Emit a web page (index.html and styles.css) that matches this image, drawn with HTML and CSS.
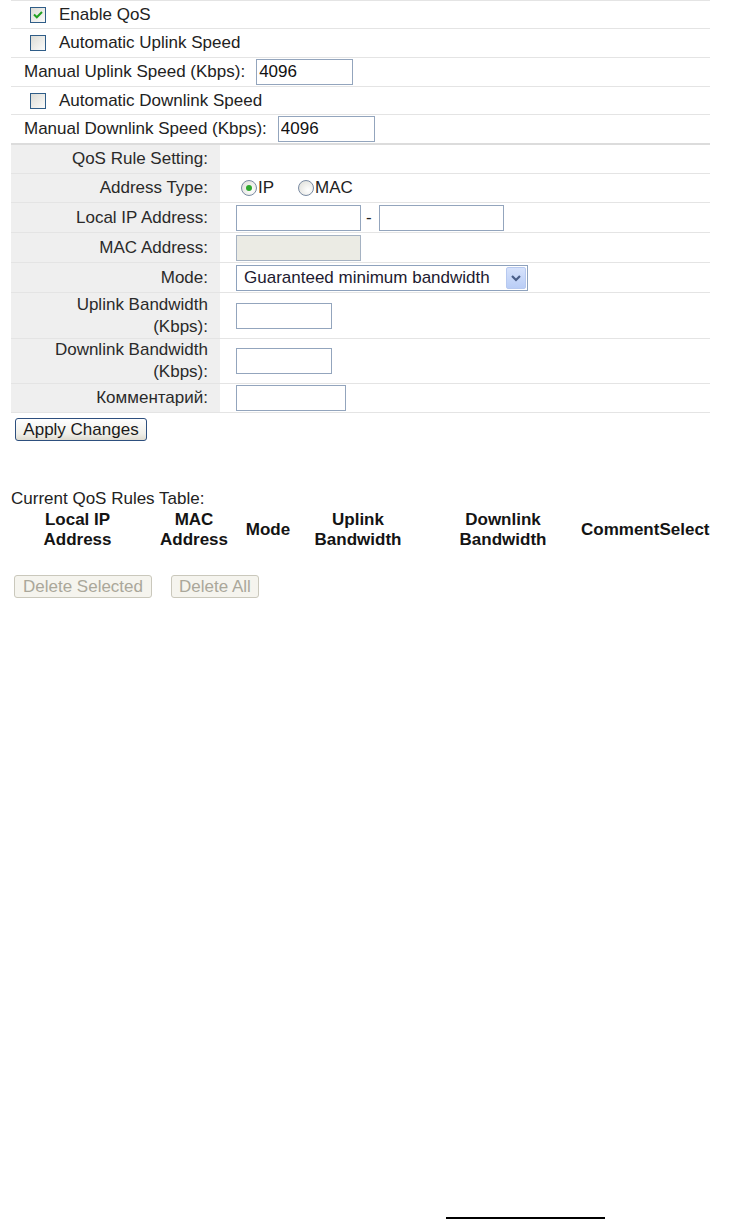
FILE: index.html
```html
<!DOCTYPE html>
<html>

<head>
    <title>QoS</title>
    <link rel="stylesheet" href="styles.css">
</head>

<body>
    <div class="page">
        <div class="qos">
            <div class="line h28 pad-cb">
                <span class="cb"><svg width="14" height="14" viewBox="0 0 14 14"><path d="M3 6.5 L5.8 9.3 L11 4" fill="none" stroke="#21a121" stroke-width="2"/></svg></span>
                <span class="cb-text">Enable QoS</span>
            </div>
            <div class="line h29 pad-cb">
                <span class="cb"></span>
                <span class="cb-text">Automatic Uplink Speed</span>
            </div>
            <div class="line h29 pad-text">
                Manual Uplink Speed (Kbps):<input class="txt speed" type="text" value="4096">
            </div>
            <div class="line h28 pad-cb">
                <span class="cb"></span>
                <span class="cb-text">Automatic Downlink Speed</span>
            </div>
            <div class="line h30 pad-text last">
                Manual Downlink Speed (Kbps):<input class="txt speed" type="text" value="4096">
            </div>
        </div>

        <div class="rules">
            <div class="field h29">
                <div class="name">QoS Rule Setting:</div>
                <div class="value"></div>
            </div>
            <div class="field h29">
                <div class="name">Address Type:</div>
                <div class="value">
                    <span class="radio on"><span class="dot"></span></span><span class="radio-text">IP</span>
                    <span class="radio second"></span><span class="radio-text">MAC</span>
                </div>
            </div>
            <div class="field h30">
                <div class="name">Local IP Address:</div>
                <div class="value">
                    <input class="txt ip" type="text"><span class="dash">-</span><input class="txt ip" type="text">
                </div>
            </div>
            <div class="field h30">
                <div class="name">MAC Address:</div>
                <div class="value">
                    <input class="txt ip" type="text" disabled>
                </div>
            </div>
            <div class="field h30">
                <div class="name">Mode:</div>
                <div class="value">
                    <div class="select">
                        <span class="select-text">Guaranteed minimum bandwidth</span>
                        <span class="arrow"><svg width="18" height="20" viewBox="0 0 18 20"><path d="M5 8 L9 12 L13 8" fill="none" stroke="#4a5f88" stroke-width="2.2"/></svg></span>
                    </div>
                </div>
            </div>
            <div class="field h46">
                <div class="name">Uplink Bandwidth<br>(Kbps):</div>
                <div class="value">
                    <input class="txt bw" type="text">
                </div>
            </div>
            <div class="field h45">
                <div class="name">Downlink Bandwidth<br>(Kbps):</div>
                <div class="value">
                    <input class="txt bw" type="text">
                </div>
            </div>
            <div class="field h29">
                <div class="name">Комментарий:</div>
                <div class="value">
                    <input class="txt comment" type="text">
                </div>
            </div>
        </div>

        <div class="apply">
            <button class="btn">Apply Changes</button>
        </div>

        <div class="current">Current QoS Rules Table:</div>
        <table class="rule-table">
            <tr>
                <th class="c1">Local IP<br>Address</th>
                <th class="c2">MAC<br>Address</th>
                <th class="c3">Mode</th>
                <th class="c4">Uplink<br>Bandwidth</th>
                <th class="c5">Downlink<br>Bandwidth</th>
                <th class="c6">Comment</th>
                <th class="c7">Select</th>
            </tr>
        </table>

        <div class="delete">
            <button class="btn off sel" disabled>Delete Selected</button>
            <button class="btn off all" disabled>Delete All</button>
        </div>

        <div class="footer"></div>
    </div>
</body>

</html>
```

FILE: styles.css
```css
html,
body {
    margin: 0;
    padding: 0;
}

body {
    font-family: "Liberation Sans", Arial, sans-serif;
    font-size: 17px;
    color: #222;
    background: #fff;
}

.page {
    min-height: 100vh;
    display: flex;
    flex-direction: column;
    align-items: flex-start;
}

/* top settings */

.qos {
    margin-left: 11px;
    width: 699px;
    border-top: 1px solid #e4e4e4;
}

.line {
    display: flex;
    align-items: center;
    box-sizing: border-box;
    border-bottom: 1px solid #e4e4e4;
    white-space: nowrap;
}

.line.last {
    border-bottom: 2px solid #dcdcdc;
}

.h28 {
    height: 28px;
}

.h29 {
    height: 29px;
}

.h30 {
    height: 30px;
}

.h45 {
    height: 45px;
}

.h46 {
    height: 46px;
}

.pad-cb {
    padding-left: 19px;
}

.pad-text {
    padding-left: 13px;
}

.cb {
    width: 16px;
    height: 16px;
    box-sizing: border-box;
    border: 1px solid #2f5d88;
    background: linear-gradient(135deg, #dcdcd6, #fbfbfa);
    display: inline-flex;
    align-items: center;
    justify-content: center;
}

.cb-text {
    margin-left: 13px;
}

.txt {
    box-sizing: border-box;
    height: 26px;
    margin: 0;
    padding: 0 2px;
    border: 1px solid #93a5bd;
    font-family: inherit;
    font-size: 17px;
    color: #111;
    background: #fff;
    outline: none;
}

.txt:disabled {
    background: #ebebe4;
    border-color: #a5b2c2;
}

.speed {
    width: 97px;
    margin-left: 11px;
}

/* rule settings */

.rules {
    margin-left: 11px;
    width: 699px;
}

.field {
    display: flex;
    box-sizing: border-box;
    border-bottom: 1px solid #e4e4e4;
}

.name {
    width: 209px;
    box-sizing: border-box;
    padding-right: 12px;
    background: #efefef;
    display: flex;
    align-items: center;
    justify-content: flex-end;
    text-align: right;
    line-height: 22px;
    color: #2a2a2a;
}

.value {
    flex: 1;
    display: flex;
    align-items: center;
    padding-left: 16px;
}

.radio {
    width: 16px;
    height: 16px;
    box-sizing: border-box;
    border: 1px solid #7a8ba3;
    border-radius: 50%;
    background: radial-gradient(circle at 65% 65%, #fff, #dcdcd6);
    display: inline-flex;
    align-items: center;
    justify-content: center;
    margin-left: 5px;
}

.radio.second {
    margin-left: 24px;
}

.radio .dot {
    width: 6px;
    height: 6px;
    border-radius: 50%;
    background: #2ea82e;
}

.radio-text {
    margin-left: 1px;
}

.ip {
    width: 125px;
}

.dash {
    margin: 0 7px 0 5px;
}

.bw {
    width: 96px;
}

.comment {
    width: 110px;
}

.select {
    box-sizing: border-box;
    width: 292px;
    height: 26px;
    border: 1px solid #8ea2bd;
    display: flex;
    align-items: center;
    background: #fff;
}

.select-text {
    flex: 1;
    padding-left: 7px;
    color: #1d1a30;
    white-space: nowrap;
}

.arrow {
    width: 20px;
    height: 22px;
    margin-right: 1px;
    box-sizing: border-box;
    border: 1px solid #b7c9f0;
    border-radius: 2px;
    background: linear-gradient(#d6e2fb, #b9cdf6);
    display: flex;
    align-items: center;
    justify-content: center;
}

/* buttons */

.btn {
    font-family: inherit;
    font-size: 17px;
    color: #1a1a1a;
    height: 23px;
    padding: 0;
    margin: 0;
    border: 1px solid #2d4f7e;
    border-radius: 3px;
    background: linear-gradient(#fefefe, #f0efe9 70%, #dedbd0);
    line-height: 20px;
    white-space: nowrap;
}

.apply {
    margin: 5px 0 0 15px;
}

.apply .btn {
    width: 132px;
}

.btn.off {
    color: #aaa79a;
    border-color: #cac8bc;
    background: #f5f4ee;
}

.delete {
    display: flex;
    gap: 19px;
    margin: 25px 0 0 14px;
}

.btn.sel {
    width: 138px;
}

.btn.all {
    width: 88px;
}

/* rules table */

.current {
    margin: 48px 0 0 11px;
    line-height: 20px;
}

.rule-table {
    margin: 1px 0 0 12px;
    border-collapse: collapse;
}

.rule-table th {
    padding: 0;
    font-weight: bold;
    line-height: 20px;
    text-align: center;
    vertical-align: middle;
    color: #141414;
    white-space: nowrap;
}

.c1 {
    width: 131px;
}

.c2 {
    width: 102px;
}

.c3 {
    width: 46px;
}

.c4 {
    width: 134px;
}

.c5 {
    width: 156px;
}

.c6 {
    width: 78px;
}

.c7 {
    width: 50px;
}

.footer {
    margin-top: auto;
    margin-left: 446px;
    width: 159px;
    height: 2px;
    background: #000;
}
```
